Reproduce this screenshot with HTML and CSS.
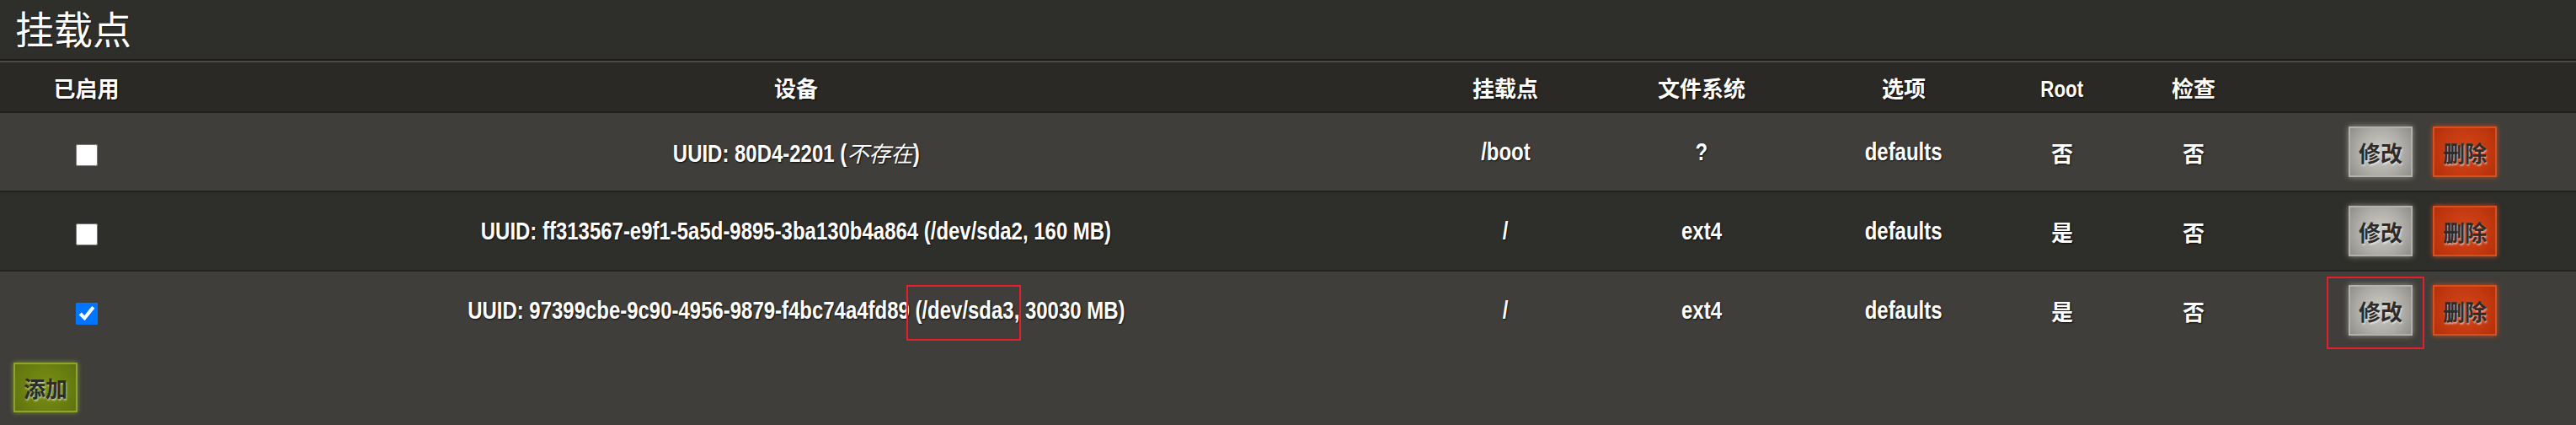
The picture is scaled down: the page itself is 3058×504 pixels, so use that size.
FILE: index.html
```html
<!DOCTYPE html>
<html lang="zh-CN">
<head>
  <meta charset="UTF-8" />
  <meta name="viewport" content="width=device-width, initial-scale=1.0"/>
  <title>挂载点</title>
  <link rel="stylesheet" href="styles.css">
</head>
<body>

<h2 class="page-title">挂载点</h2>

<table class="mounts">
  <colgroup>
    <col class="c-enabled">
    <col class="c-device">
    <col class="c-target">
    <col class="c-fs">
    <col class="c-opts">
    <col class="c-root">
    <col class="c-check">
    <col class="c-actions">
  </colgroup>
  <thead>
    <tr>
      <th>已启用</th>
      <th>设备</th>
      <th>挂载点</th>
      <th>文件系统</th>
      <th>选项</th>
      <th><span class="lat">Root</span></th>
      <th>检查</th>
      <th></th>
    </tr>
  </thead>
  <tbody>
    <tr class="row-light">
      <td><input type="checkbox" class="toggle"></td>
      <td><span class="lat">UUID: 80D4-2201 (<em class="missing">不存在</em>)</span></td>
      <td><span class="lat">/boot</span></td>
      <td><span class="lat">?</span></td>
      <td><span class="lat">defaults</span></td>
      <td class="cjk">否</td>
      <td class="cjk">否</td>
      <td>
        <div class="actions">
          <button class="btn btn-edit">修改</button>
          <button class="btn btn-remove">删除</button>
        </div>
      </td>
    </tr>
    <tr class="row-dark">
      <td><input type="checkbox" class="toggle"></td>
      <td><span class="lat">UUID: ff313567-e9f1-5a5d-9895-3ba130b4a864 (/dev/sda2, 160 MB)</span></td>
      <td><span class="lat">/</span></td>
      <td><span class="lat">ext4</span></td>
      <td><span class="lat">defaults</span></td>
      <td class="cjk">是</td>
      <td class="cjk">否</td>
      <td>
        <div class="actions">
          <button class="btn btn-edit">修改</button>
          <button class="btn btn-remove">删除</button>
        </div>
      </td>
    </tr>
    <tr class="row-light last">
      <td><input type="checkbox" class="toggle" checked></td>
      <td><span class="lat">UUID: 97399cbe-9c90-4956-9879-f4bc74a4fd89 (/dev/sda3, 30030 MB)</span></td>
      <td><span class="lat">/</span></td>
      <td><span class="lat">ext4</span></td>
      <td><span class="lat">defaults</span></td>
      <td class="cjk">是</td>
      <td class="cjk">否</td>
      <td>
        <div class="actions">
          <button class="btn btn-edit">修改</button>
          <button class="btn btn-remove">删除</button>
        </div>
      </td>
    </tr>
  </tbody>
</table>

<div class="table-footer">
  <button class="btn btn-add">添加</button>
</div>

<!-- annotation boxes drawn over the screenshot -->
<div class="mark mark-dev"></div>
<div class="mark mark-edit"></div>

</body>
</html>
```

FILE: styles.css
```css
body {
  margin: 0;
  background: #3f3e3a;
  color: #fff;
  font-family: "Liberation Sans", "Noto Sans CJK SC", sans-serif;
  position: relative;
  min-height: 504px;
}

.page-title {
  margin: 0;
  height: 70px;
  padding-left: 18px;
  background: #2e2e2a;
  border-bottom: 2px solid #1c1c19;
  font: 400 46px/64px "Noto Sans CJK SC", sans-serif;
  color: #fff;
  text-shadow: 1px 1px 1px rgba(0, 0, 0, 0.6);
}

.mounts {
  width: 3058px;
  table-layout: fixed;
  border-collapse: separate;
  border-spacing: 0;
}

.c-enabled { width: 205px; }
.c-device  { width: 1480px; }
.c-target  { width: 204px; }
.c-fs      { width: 262px; }
.c-opts    { width: 218px; }
.c-root    { width: 158px; }
.c-check   { width: 154px; }
.c-actions { width: 377px; }

.mounts th {
  height: 58px;
  padding: 0;
  background: #2a2926;
  border-top: 2px solid #4b4a46;
  border-bottom: 2px solid #1f1f1c;
  font: 700 26px "Noto Sans CJK SC", sans-serif;
  text-shadow: 1px 1px 2px rgba(0, 0, 0, 0.8);
}

.mounts th .lat {
  font-size: 27px;
}

.mounts td {
  height: 92px;
  padding: 0;
  text-align: center;
  vertical-align: middle;
  font-size: 29px;
  font-weight: 700;
  white-space: nowrap;
  text-shadow: 1px 1px 2px rgba(0, 0, 0, 0.85);
  border-bottom: 2px solid #22221f;
}

.mounts tr.last td {
  border-bottom: none;
}

.row-light td { background: #3f3e3a; }
.row-dark td  { background: #2e2e2a; }

/* the theme font is a condensed face; squeeze Liberation Sans to match */
.lat {
  display: inline-block;
  font-family: "Liberation Sans", sans-serif;
  font-weight: 700;
  transform: scaleX(0.826);
}

/* undo the squeeze for the CJK note */
.missing {
  display: inline-block;
  width: 95px;
  text-align: center;
  font: italic 400 26px "Noto Sans CJK SC", sans-serif;
  transform: scaleX(1.21);
}

.mounts td.cjk {
  font-family: "Noto Sans CJK SC", sans-serif;
  font-size: 26px;
  font-weight: 700;
}

.toggle {
  display: block;
  width: 26px;
  height: 26px;
  margin: 8px auto 0;
}

.actions {
  display: flex;
  gap: 24px;
  padding-left: 107px;
}

.btn {
  box-sizing: border-box;
  width: 76px;
  height: 60px;
  margin: 0;
  padding: 0;
  font: 700 26px "Noto Sans CJK SC", sans-serif;
  color: #2c2c2a;
  text-shadow: 1px 2px 2px rgba(255, 255, 255, 0.55);
  cursor: pointer;
}

.btn-edit {
  background: radial-gradient(circle, #cfcdc6 0%, #aeaca6 60%, #908e88 100%);
  border: 2px solid #b3b2ad;
  box-shadow: 0 0 7px rgba(225, 225, 215, 0.55);
}

.btn-remove {
  background: radial-gradient(circle, #d3461b 0%, #c2380f 65%, #b2300b 100%);
  border: 2px solid #d7501e;
  box-shadow: 0 0 6px rgba(235, 85, 25, 0.75);
}

.btn-add {
  height: 59px;
  background: radial-gradient(circle, #7b9013 0%, #6a7f10 60%, #5d720e 100%);
  border: 2px solid #8ea42c;
  box-shadow: 0 0 6px rgba(165, 205, 45, 0.6);
}

.table-footer {
  padding: 16px 0 0 16px;
}

.mark {
  position: absolute;
  box-sizing: border-box;
  border: 2px solid #e3202c;
}

.mark-dev {
  left: 1076px;
  top: 338px;
  width: 136px;
  height: 66px;
}

.mark-edit {
  left: 2762px;
  top: 328px;
  width: 116px;
  height: 86px;
}
```
